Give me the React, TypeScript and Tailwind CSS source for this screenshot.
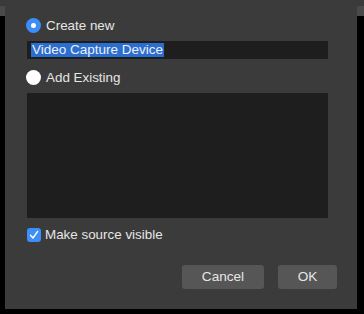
import React from "react";

export default function App() {
  const font = { fontFamily: '"Liberation Sans", Arial, sans-serif' };
  return (
    <div className="w-[364px] h-[314px] bg-black flex overflow-hidden" style={font}>
      <div className="w-[5px] flex flex-col">
        <div className="h-[6px] bg-[#3a3a3a]" />
        <div className="h-[10px] bg-[#4a4a4a]" />
      </div>
      <div className="w-[352px] h-[309px] bg-[#3b3b3b] flex flex-col pl-[21px] pr-[29px] text-[#e6e6e6]">
        <div className="flex items-center h-[15px] mt-[18px]">
          <div className="w-[15px] h-[15px] rounded-full bg-[#3d8ef8] flex items-center justify-center">
            <div className="w-[5px] h-[5px] rounded-full bg-white" />
          </div>
          <span className="ml-[5px] text-[13.4px] leading-none">Create new</span>
        </div>
        <div className="mt-[8px] ml-[1px] h-[18px] bg-[#1e1e1e] flex items-center pl-[4px]">
          <span className="bg-[#2a6ed2] text-[#f0f0f0] text-[13.5px] leading-[14px] h-[14px] px-[1px]">Video Capture Device</span>
        </div>
        <div className="flex items-center h-[15px] mt-[11px]">
          <div className="w-[15px] h-[15px] rounded-full bg-white" />
          <span className="ml-[5px] text-[13.4px] leading-none">Add Existing</span>
        </div>
        <div className="mt-[8px] ml-[1px] h-[125px] bg-[#1e1e1e]" />
        <div className="flex items-center h-[14px] mt-[10px] ml-[1px]">
          <div className="w-[14px] h-[14px] rounded-[3px] bg-[#3d8ef8] flex items-center justify-center">
            <svg width="10" height="10" viewBox="0 0 10 10">
              <path d="M1.5 5.2 L4 8 L8.6 1.5" stroke="white" strokeWidth="1.4" fill="none" strokeLinecap="round" strokeLinejoin="round" />
            </svg>
          </div>
          <span className="ml-[4px] text-[13.4px] leading-none">Make source visible</span>
        </div>
        <div className="flex justify-end mt-[23px] gap-[14px] mr-[-9px]">
          <button className="w-[82px] h-[24px] rounded-[3px] bg-[#565656] text-[13.6px] text-[#e6e6e6]">Cancel</button>
          <button className="w-[59px] h-[24px] rounded-[3px] bg-[#565656] text-[13.6px] text-[#e6e6e6]">OK</button>
        </div>
      </div>
      <div className="w-[7px] flex flex-col">
        <div className="h-[6px] bg-[#3a3a3a]" />
        <div className="h-[10px] bg-[#4a4a4a]" />
      </div>
    </div>
  );
}
